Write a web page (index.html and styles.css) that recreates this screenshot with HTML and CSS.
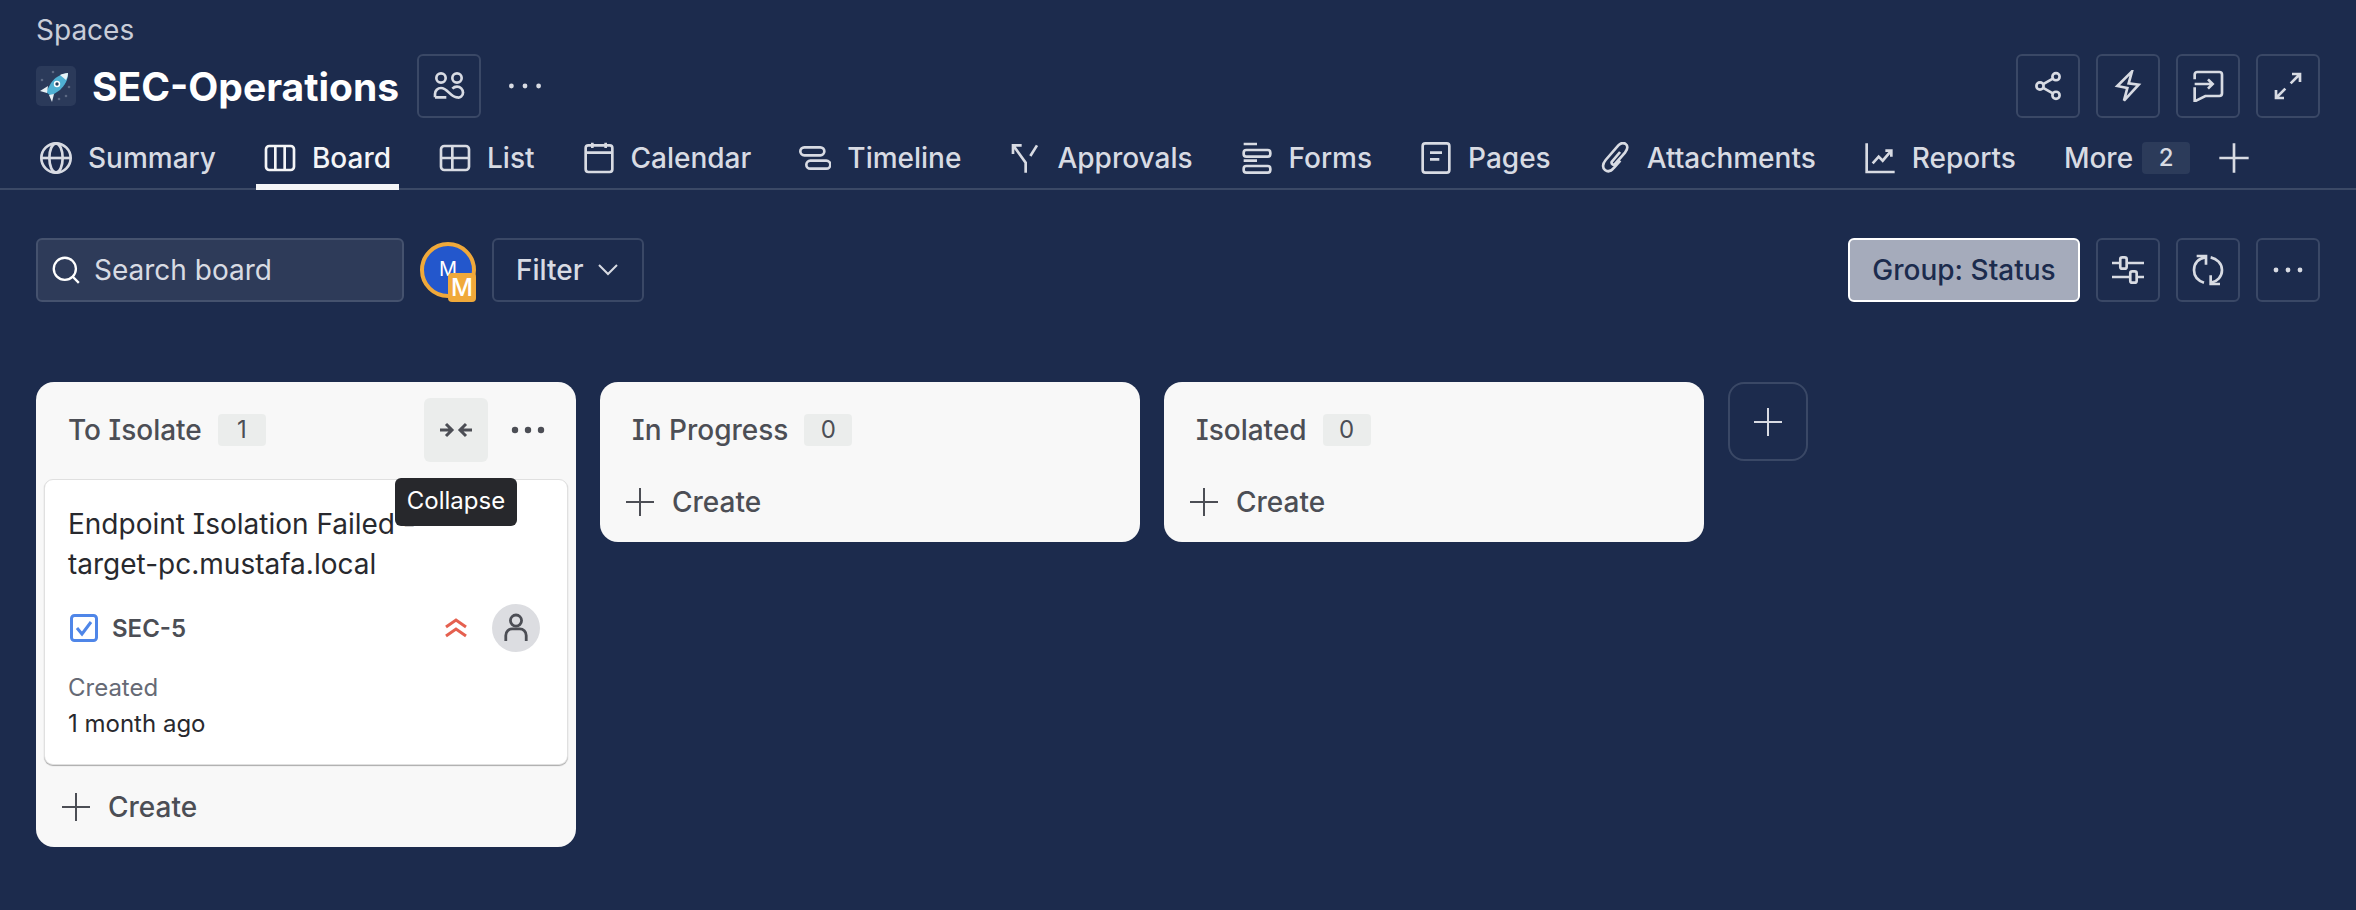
FILE: index.html
```html
<!DOCTYPE html>
<html>
<head>
  <title>SEC-Operations</title>
  <link rel="stylesheet" href="styles.css">
</head>
<body>
  <header class="page-header">
    <div class="crumb">Spaces</div>
    <div class="title-row">
      <div class="title-left">
        <svg class="space-icon" viewBox="0 0 40 40">
          <rect width="40" height="40" rx="5" fill="#2b3a5a"/>
          <circle cx="6" cy="14" r="1.3" fill="#5b6883"/><circle cx="17" cy="6" r="1.3" fill="#5b6883"/>
          <circle cx="33" cy="21" r="1.3" fill="#5b6883"/><circle cx="23" cy="33" r="1.3" fill="#5b6883"/>
          <circle cx="30" cy="30" r="1.3" fill="#5b6883"/>
          <path d="M32 7 C25 8 19 11 15 17 L10 26 L15 30 L24 24 C29 19 32 14 32 7Z" fill="#4fb0d3"/>
          <path d="M32 7 C29 7 26 8 24 9 L30 14 C31 12 32 10 32 7Z" fill="#e8f3f7"/>
          <path d="M12 20 L4 25 L11 27Z M18 28 L16 36 L13 29Z" fill="#e8f0f4"/>
          <circle cx="21" cy="18" r="3.2" fill="#fff"/><circle cx="21" cy="18" r="1.7" fill="#1f3c5c"/>
        </svg>
        <h1 class="space-name">SEC-Operations</h1>
        <button class="icon-btn">
          <svg class="ico" viewBox="0 0 24 24"><circle cx="6" cy="6" r="3.500"/><circle cx="18" cy="6" r="3.500"/><path d="M1.500 20.500V18A4.500 4.500 0 0 1 6 13.500c2.500 0 4 1.500 6 3.500s3.500 3.500 6 3.500a3.500 3.500 0 0 0 4.500-3.500 4.500 4.500 0 0 0-4.500-4.500c-1.500 0-2.500.5-3.500 1.500M1.500 20.500H10"/></svg>
        </button>
        <button class="icon-btn plain">
          <svg class="ico" viewBox="0 0 24 24"><circle class="dot" cx="1.800" cy="12" r="1.800"/><circle class="dot" cx="12" cy="12" r="1.800"/><circle class="dot" cx="22.200" cy="12" r="1.800"/></svg>
        </button>
      </div>
      <div class="btn-group">
        <button class="icon-btn">
          <svg class="ico" viewBox="0 0 24 24"><circle cx="18" cy="5" r="2.700"/><circle cx="6" cy="12" r="2.700"/><circle cx="18" cy="19" r="2.700"/><path d="M8.400 10.600l7.200-4.200M8.400 13.400l7.200 4.200"/></svg>
        </button>
        <button class="icon-btn">
          <svg class="ico" viewBox="0 0 24 24"><path d="M15 1L4 12l7.500 1.500L9 23l11-12-7.500-1z"/></svg>
        </button>
        <button class="icon-btn">
          <svg class="ico" viewBox="0 0 24 24"><path d="M2 7V3.500a2 2 0 0 1 2-2h16.500a2 2 0 0 1 2 2v14a2 2 0 0 1-2 2H10L2 23.500V13"/><path d="M2 10.500h13.500M12 7l3.500 3.500L12 14"/></svg>
        </button>
        <button class="icon-btn">
          <svg class="ico" viewBox="0 0 24 24"><path d="M14 10l7-7M15 3h6v6M10 14l-7 7M3 15v6h6"/></svg>
        </button>
      </div>
    </div>
  </header>

  <nav class="tabs">
    <a class="tab"><svg class="ico" viewBox="0 0 24 24"><circle cx="12" cy="12" r="11"/><ellipse cx="12" cy="12" rx="5" ry="11"/><path d="M1 12h22"/></svg>Summary</a>
    <a class="tab active"><svg class="ico" viewBox="0 0 24 24"><rect x="1.500" y="3" width="21" height="18" rx="2.500"/><path d="M8.500 3v18M15.500 3v18"/></svg>Board</a>
    <a class="tab"><svg class="ico" viewBox="0 0 24 24"><rect x="1.500" y="3" width="21" height="18" rx="2.500"/><path d="M1.500 12h21M10 3v18"/></svg>List</a>
    <a class="tab"><svg class="ico" viewBox="0 0 24 24"><rect x="2" y="2.500" width="20" height="20" rx="2"/><path d="M2 8h20M7 .5v4M17 .5v4"/></svg>Calendar</a>
    <a class="tab"><svg class="ico" viewBox="0 0 24 24"><rect x="1" y="4" width="18" height="6" rx="3"/><rect x="5.500" y="14" width="18" height="6" rx="3"/></svg>Timeline</a>
    <a class="tab"><svg class="ico" viewBox="0 0 24 24"><path d="M3 9V2.500h6.500M3.500 3l9 12.500V23M21 2.500l-5 8"/></svg>Approvals</a>
    <a class="tab"><svg class="ico" viewBox="0 0 24 24"><path d="M2 1.500h10M12 14H2"/><rect x="2" y="6" width="20" height="5" rx="2"/><rect x="2" y="18" width="20" height="5" rx="2"/></svg>Forms</a>
    <a class="tab"><svg class="ico" viewBox="0 0 24 24"><rect x="2" y="1" width="20" height="22" rx="2"/><path d="M7.500 8h9M7.500 13h7"/></svg>Pages</a>
    <a class="tab"><svg class="ico" viewBox="0 0 24 24"><path d="M15.800 7.500L9.500 15a1.500 1.500 0 0 0 2.500 1.500L19.500 8c2.500-3 2-5.500.5-6.500s-3.500-1-5.500 1L5 13.500c-2.500 3-2.500 6-.5 7.500s4.500 1 6.500-1.500L16 14"/></svg>Attachments</a>
    <a class="tab"><svg class="ico" viewBox="0 0 24 24"><path d="M2 1v21.500h21M6.500 16l4.500-5 3 3 6-7M16 6.500h4.500V11"/></svg>Reports</a>
    <a class="tab more">More<span class="more-count">2</span></a>
    <svg class="ico add-tab" viewBox="0 0 24 24"><path d="M12 1v22M1 12h22"/></svg>
  </nav>

  <section class="toolbar">
    <div class="toolbar-left">
      <div class="search">
        <svg class="search-ico" viewBox="0 0 24 24"><circle cx="11" cy="11" r="9.500"/><path d="M18 18l5 5"/></svg>
        <span>Search board</span>
      </div>
      <div class="avatar-wrap">
        <div class="avatar">M</div>
        <div class="avatar-badge">M</div>
      </div>
      <button class="filter">Filter
        <svg class="chev" viewBox="0 0 20 12"><path d="M1 1l9 9 9-9"/></svg>
      </button>
    </div>
    <div class="btn-group">
      <button class="group-btn">Group: Status</button>
      <button class="icon-btn">
        <svg class="ico" viewBox="0 0 24 24"><path d="M0 6.750h6.200M11 6.750h13M0 17.250h13.700M18.500 17.250H24"/><rect x="6.200" y="2.500" width="4.800" height="8.500" rx="1.500"/><rect x="13.700" y="13" width="4.800" height="8.500" rx="1.500"/></svg>
      </button>
      <button class="icon-btn">
        <svg class="ico" viewBox="0 0 24 24"><path d="M10 2.500C5 3 1.500 7 1.500 12c0 4.500 3 8 7.500 9.500M14 2.500c4.500 1 8.500 4.500 8.500 9.500 0 5-3.500 8.500-8 9.500"/><path d="M3.500 1.500h7V8M21 22.500h-7V16"/></svg>
      </button>
      <button class="icon-btn">
        <svg class="ico" viewBox="0 0 24 24"><circle class="dot" cx="3" cy="12" r="1.800"/><circle class="dot" cx="12" cy="12" r="1.800"/><circle class="dot" cx="21" cy="12" r="1.800"/></svg>
      </button>
    </div>
  </section>

  <main class="board">
    <div class="column">
      <div class="col-head">
        <span class="col-name">To Isolate</span><span class="col-count">1</span>
        <div class="col-actions">
          <button class="col-btn hover">
            <svg class="collapse-ico" viewBox="0 0 32 16"><path d="M0 8h11M6 2l6 6-6 6M32 8H21M26 2l-6 6 6 6"/></svg>
          </button>
          <button class="col-btn">
            <svg class="dots-ico" viewBox="0 0 34 8"><circle cx="4" cy="4" r="3.200"/><circle cx="17" cy="4" r="3.200"/><circle cx="30" cy="4" r="3.200"/></svg>
          </button>
        </div>
        <div class="tooltip">Collapse</div>
      </div>
      <div class="card">
        <div class="card-title">Endpoint Isolation Failed -<br>target-pc.mustafa.local</div>
        <div class="card-meta">
          <svg class="task-ico" viewBox="0 0 28 28"><rect x="1.500" y="1.500" width="25" height="25" rx="3"/><path d="M7 14l5 6 9-12"/></svg>
          <span class="card-key">SEC-5</span>
          <svg class="prio-ico" viewBox="0 0 24 20"><path d="M2 9l10-7 10 7M2 18l10-7 10 7"/></svg>
          <div class="assignee">
            <svg class="person" viewBox="0 0 28 32"><circle cx="14" cy="8" r="6"/><path d="M3 30v-6a7 7 0 0 1 7-7h8a7 7 0 0 1 7 7v6"/></svg>
          </div>
        </div>
        <div class="card-date-label">Created</div>
        <div class="card-date">1 month ago</div>
      </div>
      <button class="create"><svg class="create-ico" viewBox="0 0 28 28"><path d="M14 0v28M0 14h28"/></svg>Create</button>
    </div>

    <div class="column">
      <div class="col-head"><span class="col-name">In Progress</span><span class="col-count">0</span></div>
      <button class="create"><svg class="create-ico" viewBox="0 0 28 28"><path d="M14 0v28M0 14h28"/></svg>Create</button>
    </div>

    <div class="column">
      <div class="col-head"><span class="col-name">Isolated</span><span class="col-count">0</span></div>
      <button class="create"><svg class="create-ico" viewBox="0 0 28 28"><path d="M14 0v28M0 14h28"/></svg>Create</button>
    </div>

    <button class="add-col"><svg class="add-col-ico" viewBox="0 0 28 28"><path d="M14 0v28M0 14h28"/></svg></button>
  </main>
</body>
</html>
```

FILE: styles.css
```css
* {
  box-sizing: border-box;
}

body {
  margin: 0;
  height: 910px;
  overflow: hidden;
  background-color: #1c2b4d;
  color: #d8dbe3;
  font-family: Inter, "Liberation Sans", sans-serif;
  font-feature-settings: "cv08";
  font-size: 28px;
}

button {
  font-family: inherit;
  font-feature-settings: inherit;
  cursor: pointer;
}

.ico {
  width: 32px;
  height: 32px;
  fill: none;
  stroke: #d8dbe3;
  stroke-width: 2;
  flex-shrink: 0;
}

.ico .dot {
  fill: #d8dbe3;
  stroke: none;
}

.page-header {
  padding: 15px 36px 0;
}

.crumb {
  font-size: 28px;
  line-height: 30px;
  color: #c9cdd8;
}

.title-row {
  display: flex;
  justify-content: space-between;
  margin-top: 9px;
}

.title-left {
  display: flex;
  align-items: center;
}

.space-icon {
  width: 40px;
  height: 40px;
}

.space-name {
  margin: 0 18px 0 16px;
  font-size: 39px;
  font-weight: 700;
  color: #fff;
}

.btn-group {
  display: flex;
  gap: 16px;
}

.icon-btn {
  display: flex;
  align-items: center;
  justify-content: center;
  width: 64px;
  height: 64px;
  padding: 0;
  background: transparent;
  border: 2px solid #3a4866;
  border-radius: 6px;
}

.icon-btn.plain {
  border: none;
  margin-left: 12px;
}

.tabs {
  display: flex;
  align-items: stretch;
  gap: 32px;
  height: 64px;
  margin-top: 8px;
  padding-left: 32px;
  box-shadow: inset 0 -2px 0 #3b4966;
}

.tab {
  display: flex;
  align-items: center;
  gap: 16px;
  padding: 0 8px;
  font-weight: 500;
  white-space: nowrap;
}

.tab.active {
  color: #f4f5f7;
  box-shadow: inset 0 -6px 0 #f4f5f7;
}

.tab.active .ico {
  stroke: #f4f5f7;
}

.tab.more {
  gap: 9px;
}

.more-count {
  width: 48px;
  height: 32px;
  line-height: 32px;
  font-size: 24px;
  text-align: center;
  background-color: #2c3b5a;
  border-radius: 4px;
}

.add-tab {
  align-self: center;
  margin-left: -12px;
}

.toolbar {
  display: flex;
  justify-content: space-between;
  margin-top: 48px;
  padding: 0 36px;
}

.toolbar-left {
  display: flex;
  align-items: center;
  gap: 16px;
}

.search {
  display: flex;
  align-items: center;
  gap: 14px;
  width: 368px;
  height: 64px;
  padding-left: 14px;
  background-color: #2e3b59;
  border: 2px solid #45526e;
  border-radius: 6px;
  color: #d8dbe3;
}

.search-ico {
  width: 28px;
  height: 28px;
  fill: none;
  stroke: #fff;
  stroke-width: 2;
}

.avatar-wrap {
  position: relative;
  width: 56px;
  height: 64px;
  padding-top: 4px;
}

.avatar {
  width: 56px;
  height: 56px;
  line-height: 46px;
  font-size: 20px;
  text-align: center;
  color: #fff;
  background-color: #2357cc;
  border: 4px solid #f0a93a;
  border-radius: 50%;
}

.avatar-badge {
  position: absolute;
  right: 0;
  bottom: 0;
  width: 28px;
  height: 29px;
  line-height: 29px;
  font-size: 24px;
  font-weight: 500;
  text-align: center;
  color: #fff;
  background-color: #f0a93a;
  border-radius: 4px;
}

.filter {
  display: flex;
  align-items: center;
  gap: 14px;
  height: 64px;
  padding: 0 24px 0 22px;
  font-size: 28px;
  font-weight: 500;
  color: #d8dbe3;
  background: transparent;
  border: 2px solid #3a4866;
  border-radius: 6px;
}

.chev {
  width: 20px;
  height: 12px;
  fill: none;
  stroke: #d8dbe3;
  stroke-width: 2;
}

.group-btn {
  width: 232px;
  height: 64px;
  padding: 0;
  font-size: 28px;
  font-weight: 500;
  color: #1c2b4d;
  background-color: #a5abbb;
  border: 2px solid #fff;
  border-radius: 6px;
}

.board {
  display: flex;
  align-items: flex-start;
  gap: 24px;
  margin-top: 80px;
  padding: 0 36px;
}

.column {
  width: 540px;
  padding-bottom: 16px;
  background-color: #f8f8f8;
  border-radius: 18px;
}

.col-head {
  position: relative;
  display: flex;
  align-items: center;
  height: 96px;
  padding: 0 32px;
  color: #4c4e55;
}

.col-name {
  font-weight: 500;
}

.col-count {
  width: 48px;
  height: 32px;
  line-height: 32px;
  margin-left: 16px;
  font-size: 24px;
  text-align: center;
  background-color: #ebedec;
  border-radius: 4px;
}

.col-actions {
  display: flex;
  align-items: center;
  margin-left: auto;
  margin-right: -16px;
  gap: 8px;
}

.col-btn {
  display: flex;
  align-items: center;
  justify-content: center;
  width: 64px;
  height: 64px;
  padding: 0;
  background: transparent;
  border: none;
  border-radius: 6px;
}

.col-btn.hover {
  background-color: #ebedec;
}

.collapse-ico {
  width: 32px;
  height: 16px;
  fill: none;
  stroke: #4c4e55;
  stroke-width: 3;
}

.dots-ico {
  width: 34px;
  height: 8px;
  fill: #4c4e55;
}

.tooltip {
  position: absolute;
  top: 96px;
  left: 359px;
  z-index: 2;
  width: 122px;
  height: 48px;
  line-height: 46px;
  font-size: 24px;
  text-align: center;
  color: #fff;
  background-color: #27282c;
  border-radius: 6px;
}

.card {
  margin: 1px 8px 18px;
  padding: 24px 24px 22px 23px;
  color: #28292e;
  background-color: #fff;
  border: 1px solid #e0e0e0;
  border-radius: 9px;
  box-shadow: 0 1px 1px #aaa;
}

.card-title {
  line-height: 40px;
}

.card-meta {
  display: flex;
  align-items: center;
  height: 48px;
  margin-top: 20px;
}

.task-ico {
  width: 28px;
  height: 28px;
  margin-left: 2px;
  fill: none;
  stroke: #4f86e8;
  stroke-width: 3;
}

.card-key {
  margin-left: 14px;
  font-size: 24px;
  font-weight: 600;
  color: #4c4e55;
}

.prio-ico {
  width: 24px;
  height: 20px;
  margin-left: auto;
  fill: none;
  stroke: #e5604f;
  stroke-width: 3;
}

.assignee {
  display: flex;
  align-items: center;
  justify-content: center;
  width: 48px;
  height: 48px;
  margin-left: 24px;
  margin-right: 3px;
  background-color: #dcdde1;
  border-radius: 50%;
}

.person {
  width: 26px;
  height: 30px;
  fill: none;
  stroke: #4c4e55;
  stroke-width: 3;
}

.card-date-label {
  margin-top: 18px;
  font-size: 24px;
  line-height: 36px;
  color: #666a75;
}

.card-date {
  font-size: 24px;
  line-height: 36px;
}

.create {
  display: flex;
  align-items: center;
  gap: 18px;
  height: 48px;
  padding: 0 0 0 26px;
  font-size: 28px;
  font-weight: 500;
  color: #4c4e55;
  background: transparent;
  border: none;
}

.create-ico {
  width: 28px;
  height: 28px;
  fill: none;
  stroke: #4c4e55;
  stroke-width: 2;
}

.add-col {
  display: flex;
  align-items: center;
  justify-content: center;
  width: 80px;
  height: 79px;
  padding: 0;
  background: transparent;
  border: 2px solid #3a4866;
  border-radius: 16px;
}

.add-col-ico {
  width: 28px;
  height: 28px;
  fill: none;
  stroke: #d8dbe3;
  stroke-width: 2;
}
```
